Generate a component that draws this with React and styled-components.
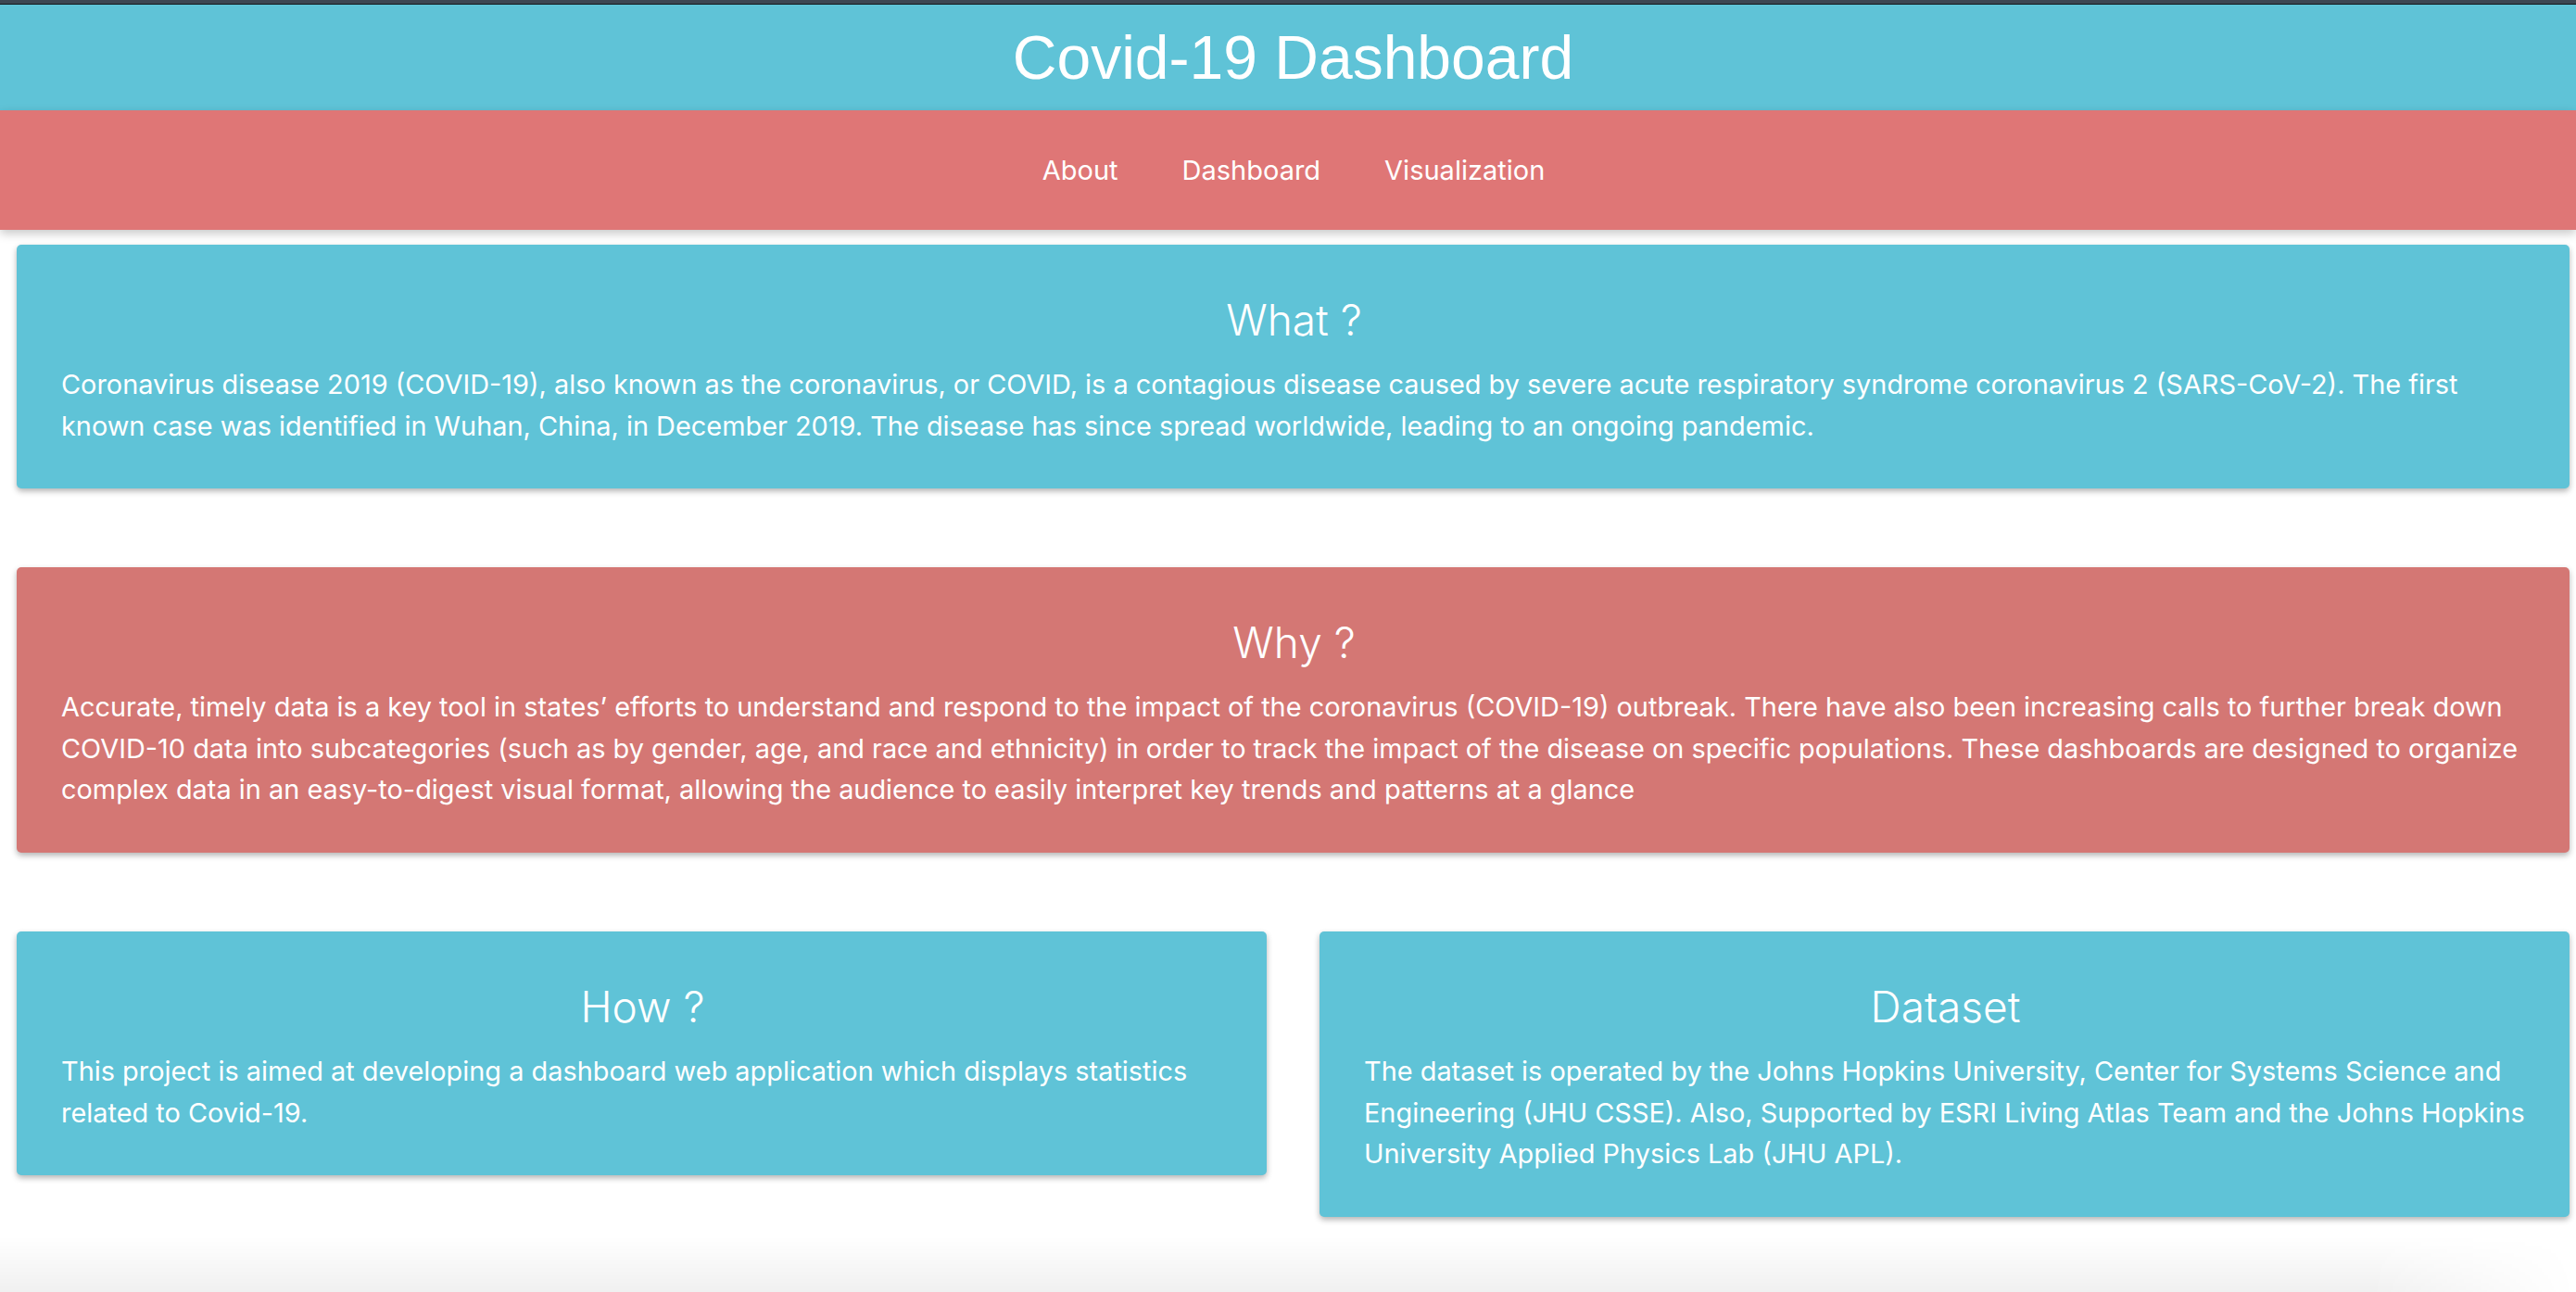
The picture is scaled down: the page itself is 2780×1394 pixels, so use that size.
import React from 'react';
import styled, { createGlobalStyle } from 'styled-components';

const GlobalStyle = createGlobalStyle`
	html, body {
		margin: 0;
		padding: 0;
		background: #fff;
		font-family: Inter, "Noto Sans", sans-serif;
	}
	* {
		box-sizing: border-box;
	}
`;

const Page = styled.div`
	display: flex;
	flex-direction: column;
	min-height: 100vh;
	overflow: hidden;
`;

const TopStrip = styled.div`
	height: 5px;
	background: #3d4753;
	border-bottom: 1px solid #14181c;
`;

const Header = styled.header`
	display: flex;
	align-items: center;
	justify-content: center;
	height: 114px;
	padding-left: 11px;
	background: #5fc3d7;
`;

const Title = styled.h1`
	margin: 0;
	color: #fff;
	font-family: "Liberation Sans", Arial, sans-serif;
	font-size: 66px;
	font-weight: 400;
	line-height: 1;
`;

const Nav = styled.nav`
	position: relative;
	z-index: 1;
	display: flex;
	align-items: center;
	justify-content: center;
	height: 129px;
	padding-left: 12px;
	background: #df7676;
	box-shadow: 0 4px 10px rgba(0, 0, 0, 0.22);
`;

const NavLink = styled.a`
	padding: 0 34.5px;
	color: #fff;
	font-size: 29px;
	font-weight: 400;
	text-decoration: none;
	cursor: pointer;
`;

const Main = styled.main`
	display: flex;
	flex-direction: column;
	gap: 85px;
	padding: 16px 7px 0 18px;
`;

const Row = styled.div`
	display: grid;
	grid-template-columns: 1fr 1fr;
	gap: 57px;
	align-items: start;
`;

const Card = styled.section`
	padding: 54px 40px 45px 48px;
	border-radius: 5px;
	background: ${(p) => p.$bg || '#5fc3d7'};
	box-shadow: 0 3px 6px rgba(0, 0, 0, 0.3);
	color: #fff;
`;

const CardTitle = styled.h2`
	margin: 0 0 20px;
	padding-right: 6px;
	text-align: center;
	font-size: 46px;
	font-weight: 300;
	line-height: 1.2;
`;

const CardText = styled.p`
	margin: 0;
	font-size: 28.9px;
	font-weight: 400;
	line-height: 44.5px;
`;

const Shade = styled.div`
	margin-top: auto;
	height: 60px;
	background: linear-gradient(to bottom, rgba(0, 0, 0, 0), rgba(0, 0, 0, 0.06));
	-webkit-mask-image: linear-gradient(to right, #000 92%, transparent);
	mask-image: linear-gradient(to right, #000 92%, transparent);
`;

const sections = [
	{
		title: 'What ?',
		text: 'Coronavirus disease 2019 (COVID-19), also known as the coronavirus, or COVID, is a contagious disease caused by severe acute respiratory syndrome coronavirus 2 (SARS-CoV-2). The first known case was identified in Wuhan, China, in December 2019. The disease has since spread worldwide, leading to an ongoing pandemic.',
	},
	{
		title: 'Why ?',
		bg: '#d47774',
		text: 'Accurate, timely data is a key tool in states\u2019 efforts to understand and respond to the impact of the coronavirus (COVID-19) outbreak. There have also been increasing calls to further break down COVID-10 data into subcategories (such as by gender, age, and race and ethnicity) in order to track the impact of the disease on specific populations. These dashboards are designed to organize complex data in an easy-to-digest visual format, allowing the audience to easily interpret key trends and patterns at a glance',
	},
];

const columns = [
	{
		title: 'How ?',
		text: 'This project is aimed at developing a dashboard web application which displays statistics related to Covid-19.',
	},
	{
		title: 'Dataset',
		text: 'The dataset is operated by the Johns Hopkins University, Center for Systems Science and Engineering (JHU CSSE). Also, Supported by ESRI Living Atlas Team and the Johns Hopkins University Applied Physics Lab (JHU APL).',
	},
];

export default function App() {
	return (
		<Page>
			<GlobalStyle />
			<TopStrip />
			<Header>
				<Title>Covid-19 Dashboard</Title>
			</Header>
			<Nav>
				<NavLink>About</NavLink>
				<NavLink>Dashboard</NavLink>
				<NavLink>Visualization</NavLink>
			</Nav>

			<Main>
				{sections.map((s) => (
					<Card key={s.title} $bg={s.bg}>
						<CardTitle>{s.title}</CardTitle>
						<CardText>{s.text}</CardText>
					</Card>
				))}

				<Row>
					{columns.map((c) => (
						<Card key={c.title}>
							<CardTitle>{c.title}</CardTitle>
							<CardText>{c.text}</CardText>
						</Card>
					))}
				</Row>
			</Main>

			<Shade />
		</Page>
	);
}
